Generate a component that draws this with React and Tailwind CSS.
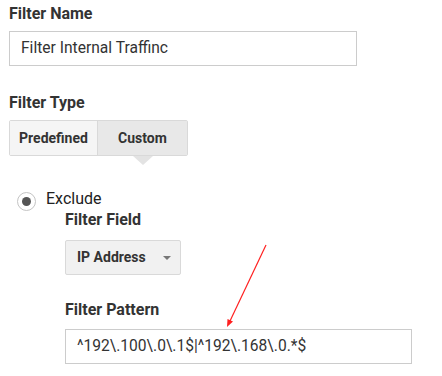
import React from "react";

export default function App() {
  return (
    <div className="relative w-[442px] h-[376px] bg-white text-[#333] font-['Roboto',sans-serif] overflow-hidden">
      <div className="pl-[9px] pt-[2px] flex flex-col">
        <div className="text-[16px] font-bold leading-[24px] text-[#333]">Filter Name</div>
        <div className="mt-[5px] w-[348px] h-[35px] border border-[#cccccc] flex items-center pl-[11px] text-[15.6px] text-[#333]">
          Filter Internal Traffinc
        </div>
        <div className="mt-[25px] text-[16px] font-bold leading-[24px]">Filter Type</div>
        <div className="relative mt-[5px] flex w-[179px] h-[36px] border border-[#d9d9d9] rounded-[2px] text-[14px] font-bold text-[#333]">
          <div className="w-[88px] flex items-center justify-center bg-[#f5f5f5] border-r border-[#d9d9d9]">Predefined</div>
          <div className="flex-1 flex items-center justify-center bg-[#e8e8e8]">Custom</div>
          <div className="absolute left-[123px] top-[35px] w-0 h-0 border-l-[10px] border-r-[10px] border-t-[9px] border-l-transparent border-r-transparent border-t-[#e3e3e3]"></div>
        </div>
        <div className="mt-[36px] flex items-start pl-[8px]">
          <div className="w-[19px] h-[19px] rounded-full border border-[#c4c4c4] flex items-center justify-center">
            <div className="w-[9px] h-[9px] rounded-full bg-[#555]"></div>
          </div>
          <span className="ml-[10px] -mt-[2px] text-[16px] leading-[18px] text-[#222]">Exclude</span>
        </div>
        <div className="pl-[56px] flex flex-col">
          <div className="-mt-[2px] text-[16px] font-bold leading-[22px]">Filter Field</div>
          <div className="mt-[9px] w-[116px] h-[35px] border border-[#d9d9d9] rounded-[2px] bg-[#f1f1f1] flex items-center pl-[11px] text-[14px] font-bold text-[#333]">
            IP Address
            <span className="ml-[17px] w-0 h-0 border-l-[4px] border-r-[4px] border-t-[4px] border-l-transparent border-r-transparent border-t-[#777]"></span>
          </div>
          <div className="mt-[23px] text-[16px] font-bold leading-[24px]">Filter Pattern</div>
          <div className="mt-[7px] w-[347px] h-[35px] border border-[#cccccc] flex items-center pl-[11px] text-[15.6px] text-[#333]">
            ^192\.100\.0\.1$|^192\.168\.0.*$
          </div>
        </div>
      </div>
      <svg className="absolute left-0 top-0" width="442" height="376">
        <line x1="266" y1="245" x2="230" y2="321" stroke="#ff2020" strokeWidth="1.2" />
        <polygon points="227,327 227.5,319 233,321.5" fill="#ff2020" />
      </svg>
    </div>
  );
}
